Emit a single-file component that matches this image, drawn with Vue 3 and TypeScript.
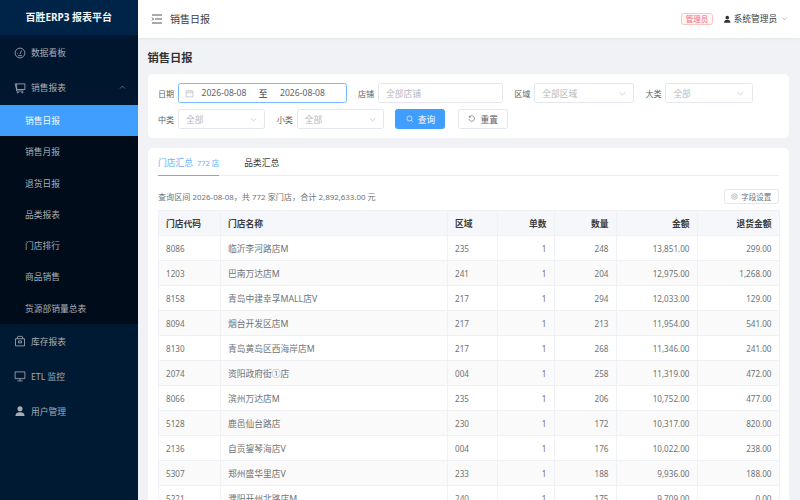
<template>
  <div class="layout">
    <aside class="sidebar">
      <div class="logo">百胜ERP3 报表平台</div>
      <nav class="menu">
        <a class="menu-item">
          <svg class="menu-icon" viewBox="0 0 16 16"><circle cx="8" cy="8" r="6.5" /><path d="M8 9.500 10 4.500M4.500 8.500h1M10.500 11.500h-5" /></svg>
          <span>数据看板</span>
        </a>
        <a class="menu-item">
          <svg class="menu-icon" viewBox="0 0 16 16"><path d="M1.500 2.500h13v7.500h-11zM3.500 2.500v9.500h9" /><circle cx="5" cy="14" r=".8" /><circle cx="11" cy="14" r=".8" /></svg>
          <span>销售报表</span>
          <svg class="caret" viewBox="0 0 10 10"><path d="M1.500 6.500 5 3l3.500 3.500" /></svg>
        </a>
        <div class="submenu">
          <a v-for="s in subItems" :key="s" class="sub-item" :class="{ active: s === '销售日报' }">{{ s }}</a>
        </div>
        <a class="menu-item">
          <svg class="menu-icon" viewBox="0 0 16 16"><path d="M2 5h12v9.500H2zM4.500 5V2.500c0-1 7-1 7 0V5M6 8h4v2.500H6z" /></svg>
          <span>库存报表</span>
        </a>
        <a class="menu-item">
          <svg class="menu-icon" viewBox="0 0 16 16"><path d="M1.500 2.500h13v9h-13zM8 11.500v3M4.500 14.500h7" /></svg>
          <span>ETL 监控</span>
        </a>
        <a class="menu-item">
          <svg class="menu-icon filled" viewBox="0 0 16 16"><circle cx="8" cy="5" r="3.400" /><path d="M2 14.500c0-4 2.500-5 6-5s6 1 6 5z" /></svg>
          <span>用户管理</span>
        </a>
      </nav>
    </aside>

    <div class="main">
      <header class="topbar">
        <svg class="fold" viewBox="0 0 12 12"><path d="M1 2h10M4 6h7M1 10h10M1 4.500 2.500 6 1 7.500" /></svg>
        <span class="crumb">销售日报</span>
        <span class="role">管理员</span>
        <svg class="user-icon" viewBox="0 0 16 16"><circle cx="8" cy="5" r="3.400" /><path d="M2 14.500c0-4 2.500-5 6-5s6 1 6 5z" /></svg>
        <span class="user-name">系统管理员</span>
        <svg class="user-caret" viewBox="0 0 10 10"><path d="M1.500 3.500 5 7l3.500-3.500" /></svg>
      </header>

      <div class="content">
        <h1 class="page-title">销售日报</h1>

        <section class="card filters">
          <div class="field">
            <label>日期</label>
            <div class="control date focus">
              <svg class="cal" viewBox="0 0 12 12"><path d="M1.500 2.500h9v8h-9zM1.500 5h9M4 1.500v2M8 1.500v2" /></svg>
              <span class="date-val">2026-08-08</span>
              <span class="date-sep">至</span>
              <span class="date-val">2026-08-08</span>
            </div>
          </div>
          <div class="field">
            <label>店铺</label>
            <div class="control w-shop"><span class="ph">全部店铺</span></div>
          </div>
          <div class="field" v-for="f in selects" :key="f.label">
            <label>{{ f.label }}</label>
            <div class="control" :class="f.cls">
              <span class="ph">{{ f.text }}</span>
              <svg class="arrow" viewBox="0 0 10 10"><path d="M1 3.200 5 7l4-3.800" /></svg>
            </div>
          </div>
          <button class="btn primary">
            <svg viewBox="0 0 12 12"><circle cx="5.500" cy="5.500" r="4" /><path d="M8.500 8.500 11 11" /></svg>
            查询
          </button>
          <button class="btn">
            <svg viewBox="0 0 12 12"><path d="M2 3.500A4.400 4.400 0 1 1 1.600 6.500M2 1v2.600h2.600" /></svg>
            重置
          </button>
        </section>

        <section class="card result">
          <div class="tabs">
            <div class="tab active">门店汇总<small>772 店</small></div>
            <div class="tab">品类汇总</div>
          </div>
          <div class="summary">
            <span>查询区间 <i>2026-08-08</i>，共 <i>772</i> 家门店，合计 <i>2,892,633.00</i> 元</span>
            <button class="col-btn">
              <svg viewBox="0 0 12 12"><circle cx="6" cy="6" r="1.700" /><path d="M6 1 10.400 3.500v5L6 11 1.600 8.500v-5z" /></svg>
              字段设置
            </button>
          </div>
          <table class="grid">
            <colgroup>
              <col v-for="w in colWidths" :key="w" :style="{ width: w + 'px' }" />
            </colgroup>
            <thead>
              <tr>
                <th>门店代码</th>
                <th>门店名称</th>
                <th>区域</th>
                <th class="num">单数</th>
                <th class="num">数量</th>
                <th class="num">金额</th>
                <th class="num">退货金额</th>
              </tr>
            </thead>
            <tbody>
              <tr v-for="r in rows" :key="r.code">
                <td class="digits">{{ r.code }}</td>
                <td>{{ r.name }}</td>
                <td class="digits">{{ r.area }}</td>
                <td class="num digits">{{ r.orders }}</td>
                <td class="num digits">{{ r.qty }}</td>
                <td class="num digits">{{ r.amount }}</td>
                <td class="num digits">{{ r.refund }}</td>
              </tr>
            </tbody>
          </table>
        </section>
      </div>
    </div>
  </div>
</template>

<script setup lang="ts">
const subItems = ['销售日报', '销售月报', '退货日报', '品类报表', '门店排行', '商品销售', '货源部销量总表']

const selects = [
  { label: '区域', text: '全部区域', cls: 'w-area' },
  { label: '大类', text: '全部', cls: 'w-cat' },
  { label: '中类', text: '全部', cls: 'w-cat' },
  { label: '小类', text: '全部', cls: 'w-cat' },
]

const colWidths = [62, 227, 50, 57, 62, 81, 82]

const rows = [
  { code: '8086', name: '临沂李河路店M', area: '235', orders: 1, qty: 248, amount: '13,851.00', refund: '299.00' },
  { code: '1203', name: '巴南万达店M', area: '241', orders: 1, qty: 204, amount: '12,975.00', refund: '1,268.00' },
  { code: '8158', name: '青岛中建幸孚MALL店V', area: '217', orders: 1, qty: 294, amount: '12,033.00', refund: '129.00' },
  { code: '8094', name: '烟台开发区店M', area: '217', orders: 1, qty: 213, amount: '11,954.00', refund: '541.00' },
  { code: '8130', name: '青岛黄岛区西海岸店M', area: '217', orders: 1, qty: 268, amount: '11,346.00', refund: '241.00' },
  { code: '2074', name: '资阳政府街①店', area: '004', orders: 1, qty: 258, amount: '11,319.00', refund: '472.00' },
  { code: '8066', name: '滨州万达店M', area: '235', orders: 1, qty: 206, amount: '10,752.00', refund: '477.00' },
  { code: '5128', name: '鹿邑仙台路店', area: '230', orders: 1, qty: 172, amount: '10,317.00', refund: '820.00' },
  { code: '2136', name: '自贡鋆琴海店V', area: '004', orders: 1, qty: 176, amount: '10,022.00', refund: '238.00' },
  { code: '5307', name: '郑州盛华里店V', area: '233', orders: 1, qty: 188, amount: '9,936.00', refund: '188.00' },
  { code: '5221', name: '濮阳开州北路店M', area: '240', orders: 1, qty: 175, amount: '9,709.00', refund: '0.00' },
]
</script>

<style>
html,
body {
  margin: 0;
  height: 100%;
  overflow: hidden;
}
</style>

<style scoped>
.layout {
  display: flex;
  height: 100vh;
  overflow: hidden;
  font-family: "Noto Sans", "Noto Sans CJK SC", sans-serif;
  font-size: 8.75px;
  color: #606266;
}

.sidebar {
  width: 137.5px;
  flex-shrink: 0;
  background: linear-gradient(#00152e, #001a33 70%);
  color: #a6adb4;
}

.logo {
  height: 35px;
  line-height: 35px;
  text-align: center;
  font-size: 10px;
  font-weight: 700;
  color: #f2f4f6;
  background: #002448;
}

.menu-item {
  display: flex;
  align-items: center;
  height: 35px;
  padding-left: 14px;
}

.menu-icon {
  width: 12px;
  height: 12px;
  margin-right: 5px;
  fill: none;
  stroke: #a6adb4;
  stroke-width: 1.1;
}

.menu-icon.filled {
  fill: #a6adb4;
  stroke: none;
}

.caret {
  width: 7px;
  height: 7px;
  margin-left: auto;
  margin-right: 12px;
  fill: none;
  stroke: #7f8a96;
  stroke-width: 1;
}

.submenu {
  background: #000c1a;
}

.sub-item {
  display: block;
  height: 31.25px;
  line-height: 32.5px;
  padding-left: 25px;
}

.sub-item.active {
  background: #409eff;
  color: #f2f8ff;
}

.main {
  flex: 1;
  min-width: 0;
  background: #f0f2f5;
}

.topbar {
  display: flex;
  align-items: center;
  height: 37.5px;
  padding: 0 12.4px 0 13.2px;
  background: #fff;
  box-shadow: 0 1px 3px rgba(0, 0, 0, 0.06);
}

.fold {
  width: 12px;
  height: 12px;
  margin-right: 7.3px;
  fill: none;
  stroke: #444;
  stroke-width: 0.9;
}

.crumb {
  font-size: 10px;
  color: #3a3c40;
  margin-right: auto;
}

.role {
  padding: 0 4px;
  height: 12.5px;
  line-height: 11px;
  font-size: 7.5px;
  color: #f56c6c;
  background: #fef6f6;
  border: 1px solid #fbc4c4;
  border-radius: 2.5px;
  box-sizing: border-box;
  margin-right: 9.3px;
}

.user-icon {
  width: 8.5px;
  height: 8.5px;
  margin-right: 2.5px;
  fill: #303133;
}

.user-name {
  color: #3a3c40;
}

.user-caret {
  width: 7px;
  height: 7px;
  margin-left: 3.3px;
  fill: none;
  stroke: #a8abb2;
  stroke-width: 1;
}

.content {
  padding: 12.5px 10.75px 12.5px 10px;
}

.page-title {
  margin: 0 0 9px;
  font-size: 11.25px;
  line-height: 15px;
  font-weight: 700;
  color: #303133;
}

.card {
  background: #fff;
  border-radius: 5px;
}

.filters {
  display: flex;
  flex-wrap: wrap;
  align-items: center;
  gap: 6.25px 11.25px;
  padding: 9.25px 10.5px 9px;
  margin-bottom: 10px;
}

.field {
  display: flex;
  align-items: center;
  gap: 3.75px;
}

.field label {
  font-size: 8.125px;
  color: #606266;
}

.control {
  display: flex;
  align-items: center;
  height: 19.75px;
  box-sizing: border-box;
  padding: 0 7px;
  border: 1px solid #e4e7ed;
  border-radius: 2.5px;
  background: #fff;
}

.control.focus {
  border-color: #79bbff;
}

.date {
  width: 168.75px;
  padding-left: 6px;
}

.cal {
  width: 9px;
  height: 9px;
  flex-shrink: 0;
  fill: none;
  stroke: #b4b7bd;
  stroke-width: 0.9;
}

.date-val {
  width: 60px;
  flex-shrink: 0;
  text-align: center;
  font-size: 8.6px;
  color: #606266;
}

.date-sep {
  width: 18.5px;
  flex-shrink: 0;
  text-align: center;
  color: #303133;
}

.w-shop {
  width: 125px;
}

.w-area {
  width: 100px;
}

.w-cat {
  width: 87.5px;
}

.ph {
  color: #b4b7bd;
}

.arrow {
  width: 7px;
  height: 7px;
  margin-left: auto;
  margin-right: 0.5px;
  fill: none;
  stroke: #b4b7bd;
  stroke-width: 0.9;
}

.btn {
  display: inline-flex;
  align-items: center;
  justify-content: center;
  gap: 4.5px;
  width: 50px;
  height: 19.75px;
  padding: 0;
  font: inherit;
  color: #606266;
  background: #fff;
  border: 1px solid #e4e7ed;
  border-radius: 2.5px;
}

.btn svg {
  width: 7.5px;
  height: 7.5px;
  fill: none;
  stroke: currentColor;
  stroke-width: 1;
}

.btn.primary {
  color: #fff;
  background: #409eff;
  border-color: #409eff;
  margin-right: 1.5px;
}

.result {
  padding: 6px 10.5px 0;
}

.tabs {
  display: flex;
  height: 20.5px;
  border-bottom: 1.5px solid #ebedf2;
  margin-bottom: 13px;
}

.tab {
  line-height: 19px;
  color: #3a3c40;
  margin-right: 25px;
}

.tab.active {
  height: 20.5px;
  color: #66b1ff;
  border-bottom: 1.5px solid #66b1ff;
}

.tab small {
  font-size: 7.5px;
  margin-left: 4px;
}

.summary {
  display: flex;
  align-items: center;
  justify-content: space-between;
  height: 15.5px;
  margin-bottom: 6px;
  color: #6f7276;
  font-size: 8.125px;
}

.summary i {
  font-style: normal;
  font-size: 7.9px;
}

.col-btn {
  display: inline-flex;
  align-items: center;
  justify-content: center;
  gap: 3px;
  width: 55px;
  height: 15.5px;
  padding: 0;
  font: inherit;
  font-size: 7.5px;
  color: #6f7276;
  background: #fff;
  border: 1px solid #e4e7ed;
  border-radius: 2.5px;
}

.col-btn svg {
  width: 7px;
  height: 7px;
  fill: none;
  stroke: #909399;
  stroke-width: 1;
}

.grid {
  width: 621px;
  table-layout: fixed;
  border-collapse: collapse;
}

.grid th,
.grid td {
  height: 25px;
  padding: 0 7.5px 0 7px;
  box-sizing: border-box;
  border: 0.6px solid #f0f1f6;
  text-align: left;
  color: #6f7276;
}

.grid th {
  font-weight: 700;
  color: #3a3c40;
  background: #f5f7fa;
}

.grid td.digits {
  font-size: 8.125px;
}

.grid tbody tr:nth-child(even) td {
  background: #fafafa;
}

.grid .num {
  text-align: right;
}
</style>
